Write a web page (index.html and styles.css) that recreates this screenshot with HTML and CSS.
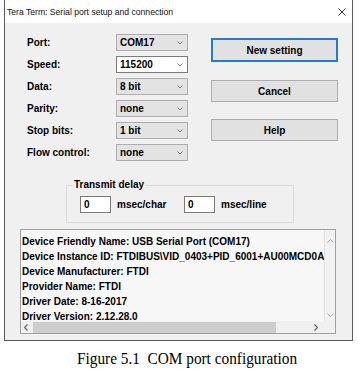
FILE: index.html
```html
<!DOCTYPE html>
<html lang="en">
<head>
    <meta charset="UTF-8">
    <title>Tera Term: Serial port setup and connection</title>
    <link rel="stylesheet" href="styles.css">
</head>
<body>
<div class="window">
    <div class="titlebar">
        <span class="title">Tera Term: Serial port setup and connection</span>
        <svg class="close" width="8" height="8" viewBox="0 0 8 8"><path d="M0.5 0.5L7.5 7.5M7.5 0.5L0.5 7.5"/></svg>
    </div>
    <div class="dialog">
        <div class="top">
            <div class="form">
                <div class="row">
                    <label>Port:</label>
                    <div class="combo">COM17<svg class="chev" width="6" height="4" viewBox="0 0 6 4"><path d="M0.5 0.5L3 3L5.5 0.5"/></svg></div>
                </div>
                <div class="row">
                    <label>Speed:</label>
                    <div class="combo edit">115200<svg class="chev" width="6" height="4" viewBox="0 0 6 4"><path d="M0.5 0.5L3 3L5.5 0.5"/></svg></div>
                </div>
                <div class="row">
                    <label>Data:</label>
                    <div class="combo">8 bit<svg class="chev" width="6" height="4" viewBox="0 0 6 4"><path d="M0.5 0.5L3 3L5.5 0.5"/></svg></div>
                </div>
                <div class="row">
                    <label>Parity:</label>
                    <div class="combo">none<svg class="chev" width="6" height="4" viewBox="0 0 6 4"><path d="M0.5 0.5L3 3L5.5 0.5"/></svg></div>
                </div>
                <div class="row">
                    <label>Stop bits:</label>
                    <div class="combo">1 bit<svg class="chev" width="6" height="4" viewBox="0 0 6 4"><path d="M0.5 0.5L3 3L5.5 0.5"/></svg></div>
                </div>
                <div class="row">
                    <label>Flow control:</label>
                    <div class="combo">none<svg class="chev" width="6" height="4" viewBox="0 0 6 4"><path d="M0.5 0.5L3 3L5.5 0.5"/></svg></div>
                </div>
            </div>
            <div class="buttons">
                <button class="btn default">New setting</button>
                <button class="btn cancel">Cancel</button>
                <button class="btn help">Help</button>
            </div>
        </div>
        <fieldset class="delay">
            <legend>Transmit delay</legend>
            <div class="delay-row">
                <div class="num">0</div>
                <span class="unit">msec/char</span>
                <div class="num">0</div>
                <span class="unit">msec/line</span>
            </div>
        </fieldset>
        <div class="info">
            <div class="info-main">
                <div class="info-text">
                    <div>Device Friendly Name: USB Serial Port (COM17)</div>
                    <div>Device Instance ID: FTDIBUS\VID_0403+PID_6001+AU00MCD0A\0000</div>
                    <div>Device Manufacturer: FTDI</div>
                    <div>Provider Name: FTDI</div>
                    <div>Driver Date: 8-16-2017</div>
                    <div>Driver Version: 2.12.28.0</div>
                </div>
                <div class="vscroll">
                    <svg width="7" height="4" viewBox="0 0 7 4"><path d="M0.5 3.5L3.5 0.5L6.5 3.5"/></svg>
                    <svg width="7" height="4" viewBox="0 0 7 4"><path d="M0.5 0.5L3.5 3.5L6.5 0.5"/></svg>
                </div>
            </div>
            <div class="hscroll">
                <svg class="harrow" width="4" height="7" viewBox="0 0 4 7"><path d="M3.5 0.5L0.5 3.5L3.5 6.5"/></svg>
                <div class="thumb"></div>
                <svg class="harrow right" width="4" height="7" viewBox="0 0 4 7"><path d="M0.5 0.5L3.5 3.5L0.5 6.5"/></svg>
            </div>
        </div>
    </div>
</div>
<p class="caption"><span>Figure 5.1&nbsp; COM port configuration</span></p>
</body>
</html>
```

FILE: styles.css
```css
body, html {
    margin: 0;
    padding: 0;
    background-color: #ffffff;
    font-family: 'Liberation Sans', Arial, sans-serif;
    color: #000000;
}
.window {
    margin-left: 4px;
    width: 349px;
    box-sizing: border-box;
    border-left: 1px solid #5a5a5a;
    border-right: 1px solid #5a5a5a;
    border-bottom: 1px solid #5a5a5a;
}
.titlebar {
    height: 23px;
    background-color: #ffffff;
    display: flex;
    align-items: center;
    justify-content: space-between;
    padding: 0 6px 0 2px;
}
.title {
    font-size: 8.6px;
    color: #111111;
}
.close path {
    stroke: #333333;
    stroke-width: 1;
    fill: none;
}
.dialog {
    background-color: #f0f0f0;
    height: 317px;
    padding-top: 11px;
    box-sizing: border-box;
}
.top {
    display: flex;
}
.form {
    padding-left: 22px;
    display: flex;
    flex-direction: column;
    gap: 5px;
}
.row {
    display: flex;
    align-items: center;
    height: 17px;
}
.row label, .combo, .btn, legend, .unit, .num, .info-text {
    font-size: 10px;
    font-weight: bold;
}
.row label {
    width: 89px;
}
.combo {
    width: 72px;
    height: 17px;
    box-sizing: border-box;
    border: 1px solid #adadad;
    background-color: #e3e3e3;
    display: flex;
    align-items: center;
    justify-content: space-between;
    padding: 0 4px 0 3px;
}
.combo.edit {
    background-color: #ffffff;
    border-color: #7a7a7a;
}
.chev path {
    stroke: #7a7a7a;
    stroke-width: 1;
    fill: none;
}
.buttons {
    margin-left: 23px;
    display: flex;
    flex-direction: column;
    padding-top: 4px;
}
.btn {
    width: 127px;
    height: 22px;
    box-sizing: border-box;
    border: 1px solid #adadad;
    background-color: #e1e1e1;
    font-family: 'Liberation Sans', Arial, sans-serif;
    color: #000000;
    padding: 0;
    cursor: pointer;
}
.btn.default {
    height: 24px;
    border: 2px solid #1e7fd6;
}
.btn.cancel {
    margin-top: 18px;
}
.btn.help {
    margin-top: 17px;
}
.delay {
    margin: 18px 0 0 61px;
    width: 228px;
    box-sizing: border-box;
    border: 1px solid #d9d9d9;
    padding: 5px 0 9px 6px;
}
.delay legend {
    padding: 0 1px;
    line-height: 12px;
}
.delay-row {
    display: flex;
    align-items: center;
    gap: 6px;
    padding-left: 7px;
}
.num {
    width: 31px;
    height: 17px;
    box-sizing: border-box;
    border: 1px solid #7a7a7a;
    background-color: #ffffff;
    padding-left: 3px;
    line-height: 15px;
}
.unit {
    width: 61px;
}
.info {
    margin: 6px 0 0 15px;
    width: 316px;
    height: 105px;
    box-sizing: border-box;
    border: 1px solid #a0a0a0;
    background-color: #f7f7f7;
    display: flex;
    flex-direction: column;
}
.info-main {
    display: flex;
    height: 91px;
}
.info-text {
    flex: 1;
    min-width: 0;
    overflow: hidden;
    white-space: nowrap;
    padding: 4px 0 0 1px;
    line-height: 15px;
}
.vscroll {
    width: 10px;
    background-color: #f2f2f2;
    border-left: 1px solid #e0e0e0;
    display: flex;
    flex-direction: column;
    justify-content: space-between;
    align-items: center;
    padding: 9px 0 4px;
}
.vscroll path {
    stroke: #a6a6a6;
    stroke-width: 1;
    fill: none;
}
.hscroll {
    height: 12px;
    background-color: #f0f0f0;
    display: flex;
    align-items: center;
    padding: 0 17px 0 3px;
}
.hscroll .thumb {
    height: 11px;
    width: 243px;
    margin-left: 5px;
    background-color: #cdcdcd;
}
.hscroll .harrow.right {
    margin-left: auto;
}
.harrow path {
    stroke: #606060;
    stroke-width: 1.2;
    fill: none;
}
.caption {
    margin: 8px 0 0 0;
    padding-left: 77px;
    height: 20px;
    line-height: 20px;
    font-family: 'Liberation Serif', 'Times New Roman', serif;
    font-size: 17px;
}
.caption span {
    display: inline-block;
    white-space: nowrap;
    transform: scaleX(0.9);
    transform-origin: left center;
}
```
